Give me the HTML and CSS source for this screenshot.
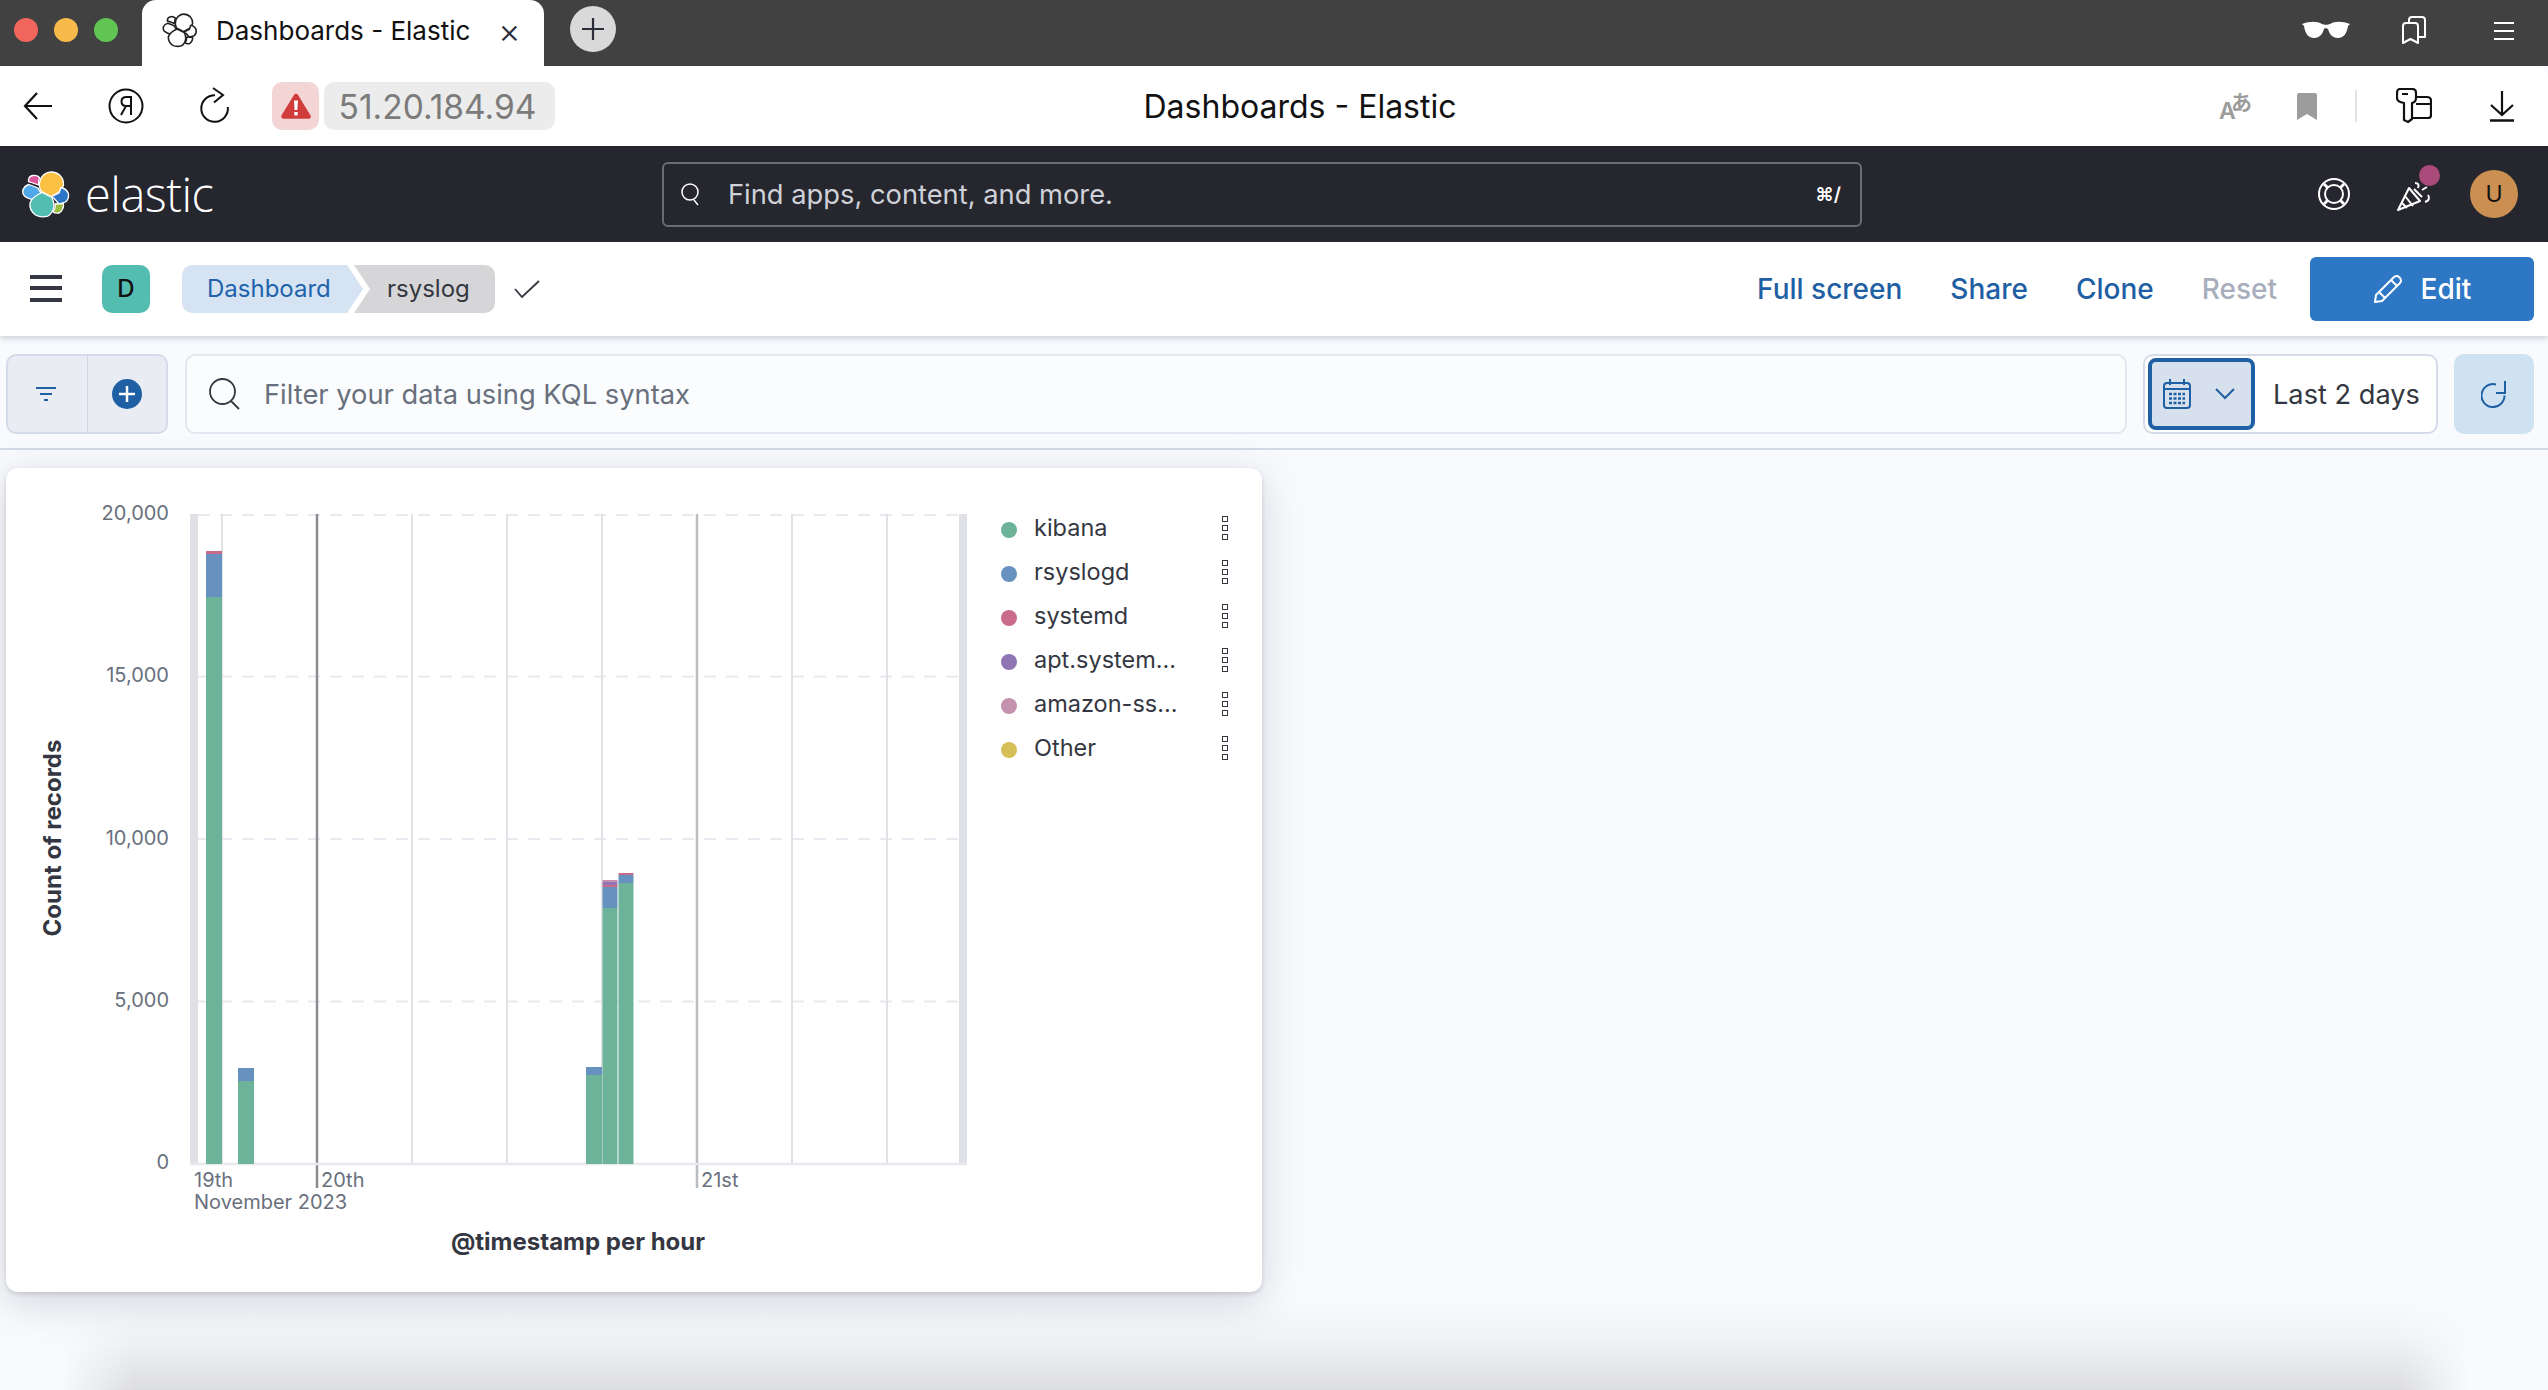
FILE: index.html
```html
<!DOCTYPE html>
<html lang="en">
<head>
  <meta charset="UTF-8">
  <title>Dashboards - Elastic</title>
  <link rel="stylesheet" href="styles.css">
</head>
<body>
  <div class="tabstrip">
    <div class="lights">
      <span class="light red"></span>
      <span class="light yellow"></span>
      <span class="light green"></span>
    </div>
    <div class="tab">
      <svg class="favicon" width="36" height="36" viewBox="0 0 50 50" fill="#fff" stroke="#222" stroke-width="2.200" stroke-linejoin="round">
        <path d="M12 6.500Q16 6 18.500 8.500Q17.500 12 17.500 16L9 13Q7 13 7.500 11Q8 7 12 6.500z"/>
        <path d="M30 3C38 3 43 9 42.500 16C42 19 40 21 38 23L30 27.500L20 22C18 18 18 15 19 12C20 7 25 3 30 3z"/>
        <path d="M8 15.500L17 19Q18 22 20 23.500L14 31Q7 30 3.500 27Q1 24 2 20.500Q4 16.500 8 15.500z"/>
        <path d="M40 18.500Q46 20 47.500 25Q48 30 44.500 33L38 35Q34 30 31 27.500L38 24z"/>
        <path d="M21 23.500L31 28.500Q33 33 33 37Q32 44 27 47Q20 49 14.500 46Q8 41 9 34Q11 28 21 23.500z"/>
        <path d="M34 35L42.500 34.500Q43 41 38 44Q34 44.500 32 43Q35 39 34 35z"/>
      </svg>
      <span class="tab-title">Dashboards - Elastic</span>
      <span class="tab-close">×</span>
    </div>
    <div class="newtab">
      <svg width="24" height="24" viewBox="0 0 24 24" stroke="#2b2e3a" stroke-width="2.200"><path d="M12 1v22M1 12h22"/></svg>
    </div>
    <div class="strip-right">
      <svg width="48" height="18" viewBox="0 0 48 18" fill="#fff"><path d="M0 3C8 0 15 0 20 3c2 1 6 1 8 0 5-3 12-3 20 0l-2 2c-1 7-4 12-10 12-7 0-9-6-10-9-1-1-4-1-4 0-1 3-3 9-10 9C6 17 3 12 2 5z"/></svg>
      <svg width="24" height="29" viewBox="0 0 24 29" fill="none" stroke="#fff" stroke-width="2" stroke-linejoin="round"><path d="M1 10q0-3 3-3h9q3 0 3 3v17l-7.500-4L1 27zM7 7V4q0-3 3-3h10q3 0 3 3v17l-7 0"/></svg>
      <svg width="20" height="19" viewBox="0 0 20 19" stroke="#fff" stroke-width="2"><path d="M0 2h20M0 10h20M0 18h20"/></svg>
    </div>
  </div>

  <div class="toolbar">
    <div class="toolbar-left">
      <svg width="30" height="28" viewBox="0 0 30 28" fill="none" stroke="#111" stroke-width="2.200"><path d="M29 14H2M14 1L2 14l12 13"/></svg>
      <svg class="ya" width="36" height="36" viewBox="0 0 36 36" fill="none" stroke="#111" stroke-width="2"><circle cx="18" cy="18" r="16.500"/><path d="M23 27V9h-4.500q-5 0-5 4.500t5 4.500H23M18 18l-5 9"/></svg>
      <svg class="reload" width="30" height="38" viewBox="0 0 30 38" fill="none" stroke="#111" stroke-width="2"><path d="M15 8.200A13.300 13.300 0 1 0 27.800 20M13 1l10 7-9 7.500"/></svg>
      <div class="site-warn">
        <svg width="30" height="27" viewBox="0 0 30 27"><path d="M15 3L27.500 23.500H2.500z" fill="#d03c3c" stroke="#d03c3c" stroke-width="4.500" stroke-linejoin="round"/><path d="M13 7.500h4l-.6 9.500h-2.800z" fill="#fff"/><rect x="13.300" y="19" width="3.400" height="3.400" fill="#fff"/></svg>
      </div>
      <div class="url-pill">51.20.184.94</div>
    </div>
    <div class="page-title">Dashboards - Elastic</div>
    <div class="toolbar-right">
      <div class="translate"><span class="tr-a">A</span><span class="tr-b">あ</span></div>
      <svg class="saved" width="20" height="27" viewBox="0 0 20 27" fill="#9c9c9c"><path d="M2 0h16q2 0 2 2v25l-10-6L0 27V2q0-2 2-2z"/></svg>
      <span class="tool-sep"></span>
      <svg class="keycard" width="36" height="36" viewBox="0 0 36 36" fill="none" stroke="#111" stroke-width="2.200" stroke-linejoin="round"><path d="M4 1h12q4 0 4 4v5q0 4-4 5v16l-4 3-4-2V15Q1 14 1 10V5q0-4 3-4zM6 6h6" /><path d="M20 9h11q4 0 4 4v14q0 3-3 3H16M20 16h15"/></svg>
      <svg class="download" width="24" height="31" viewBox="0 0 24 31" fill="none" stroke="#111" stroke-width="2.200"><path d="M12 0v24M1 14l11 10 11-10"/><path d="M0 29.500h24" stroke-width="2.500"/></svg>
    </div>
  </div>

  <header class="elastic-bar">
    <div class="logo">
      <svg width="50" height="50" viewBox="0 0 50 50" stroke="#fff" stroke-width="1.300" stroke-linejoin="round">
        <path d="M12 6.500Q16 6 18.500 8.500Q17.500 12 17.500 16L9 13Q7 13 7.500 11Q8 7 12 6.500z" fill="#d9569b"/>
        <path d="M30 3C38 3 43 9 42.500 16C42 19 40 21 38 23L30 27.500L20 22C18 18 18 15 19 12C20 7 25 3 30 3z" fill="#fcc042"/>
        <path d="M8 15.500L17 19Q18 22 20 23.500L14 31Q7 30 3.500 27Q1 24 2 20.500Q4 16.500 8 15.500z" fill="#4fa8e8"/>
        <path d="M40 18.500Q46 20 47.500 25Q48 30 44.500 33L38 35Q34 30 31 27.500L38 24z" fill="#2c75c6"/>
        <path d="M21 23.500L31 28.500Q33 33 33 37Q32 44 27 47Q20 49 14.500 46Q8 41 9 34Q11 28 21 23.500z" fill="#52bdb2"/>
        <path d="M34 35L42.500 34.500Q43 41 38 44Q34 44.500 32 43Q35 39 34 35z" fill="#99bb3f"/>
      </svg>
      <span class="wordmark">elastic</span>
    </div>
    <div class="global-search">
      <svg width="20" height="24" viewBox="0 0 20 24" fill="none" stroke="#fff" stroke-width="1.500"><circle cx="9" cy="10" r="8"/><path d="M13 18l4 5"/></svg>
      <span class="global-search-text">Find apps, content, and more.</span>
      <span class="shortcut">⌘/</span>
    </div>
    <div class="header-icons">
      <svg class="help-icon" width="32" height="32" viewBox="0 0 32 32" fill="none" stroke="#fff" stroke-width="2"><circle cx="16" cy="16" r="15"/><circle cx="16" cy="16" r="9"/><path d="M6 6l4 4M26 6l-4 4M6 26l4-4M26 26l-4-4" stroke-width="3"/></svg>
      <div class="party">
        <svg width="34" height="32" viewBox="0 0 34 32" fill="none" stroke="#fff" stroke-width="2" stroke-linejoin="round"><path d="M12 8L1 30l22-9zM8 16l8 10M5 23l5 5M17 9l8 8"/><path d="M18 3q5 0 3 5M25 10l5-3M28 22q6-2 3-7"/></svg>
        <span class="party-dot"></span>
      </div>
      <div class="user-avatar">U</div>
    </div>
  </header>

  <nav class="navbar">
    <svg class="hamburger" width="32" height="28" viewBox="0 0 32 28" fill="#343741"><rect y="0" width="32" height="4"/><rect y="11" width="32" height="4"/><rect y="23" width="32" height="4"/></svg>
    <div class="space-badge">D</div>
    <div class="crumbs">
      <span class="crumb crumb-link">Dashboard</span>
      <span class="crumb crumb-current">rsyslog</span>
    </div>
    <svg class="saved-check" width="26" height="18" viewBox="0 0 26 18" fill="none" stroke="#343741" stroke-width="1.800"><path d="M1 9l7 8L25 1"/></svg>
    <div class="nav-actions">
      <a class="nav-link">Full screen</a>
      <a class="nav-link">Share</a>
      <a class="nav-link">Clone</a>
      <a class="nav-link disabled">Reset</a>
      <button class="edit-btn">
        <svg width="30" height="30" viewBox="0 0 30 30" fill="none" stroke="#fff" stroke-width="2" stroke-linejoin="round"><path d="M3 21L21 3q3-2 5 0l1 1q2 3 0 5L9 27l-7 1zM6 18l6 6M18 6l6 6"/></svg>
        Edit
      </button>
    </div>
  </nav>

  <div class="querybar">
    <div class="filter-group">
      <div class="filter-btn">
        <svg width="20" height="15" viewBox="0 0 20 15" fill="#1f5fa3"><rect width="20" height="2"/><rect x="4" y="6" width="12" height="2"/><rect x="8" y="12" width="4" height="2"/></svg>
      </div>
      <div class="filter-btn add">
        <svg width="30" height="30" viewBox="0 0 30 30"><circle cx="15" cy="15" r="15" fill="#1f5fa3"/><path d="M15 7v16M7 15h16" stroke="#fff" stroke-width="2.500"/></svg>
      </div>
    </div>
    <div class="kql-input">
      <svg width="32" height="32" viewBox="0 0 32 32" fill="none" stroke="#343741" stroke-width="1.800"><circle cx="14.500" cy="13.500" r="12.500"/><path d="M23 23l8 8"/></svg>
      <span>Filter your data using KQL syntax</span>
    </div>
    <div class="date-picker">
      <div class="date-quick">
        <svg width="28" height="30" viewBox="0 0 28 30" fill="none" stroke="#1f5fa3" stroke-width="2"><rect x="1" y="4" width="26" height="25" rx="3"/><path d="M1 10h26M7 0v6M21 0v6"/><path d="M6 15h16M6 19.500h16M6 24h16" stroke-width="2.500" stroke-dasharray="3 1.500"/></svg>
        <svg width="20" height="12" viewBox="0 0 20 12" fill="none" stroke="#1f5fa3" stroke-width="2"><path d="M1 1l9 9 9-9"/></svg>
      </div>
      <span class="date-label">Last 2 days</span>
    </div>
    <div class="refresh-btn">
      <svg width="26" height="28" viewBox="0 0 26 28" fill="none" stroke="#1f5fa3" stroke-width="2"><path d="M15 4.500A11.500 11.500 0 1 0 23.500 15.500M24 1v12H15"/></svg>
    </div>
  </div>

  <main class="dashboard">
    <section class="panel">
      <svg class="chart" width="995" height="824" viewBox="0 0 995 824">
        <!-- panel origin is 6,468 in page pixels: every coordinate below is already shifted -->
        <rect x="184" y="46" width="8" height="650" fill="#e0e1e6"/>
        <rect x="953" y="46" width="8" height="650" fill="#e0e1e6"/>
        <g stroke="#e9eaef" stroke-width="2" stroke-dasharray="12 10">
          <path d="M192 47H953M192 208.500H953M192 371H953M192 533.500H953"/>
        </g>
        <g stroke="#e1e2e6" stroke-width="2">
          <path d="M216 46V696M406 46V696M501 46V696M596 46V696M786 46V696M881 46V696"/>
        </g>
        <path d="M311 46V720" stroke="#8b8c90" stroke-width="2.500"/>
        <path d="M691 46V720" stroke="#bcbdc1" stroke-width="2.500"/>
        <path d="M184 696H961" stroke="#e8e9ee" stroke-width="2.500"/>

        <rect x="200" y="129" width="16" height="567" fill="#6db39a"/>
        <rect x="200" y="85" width="16" height="44" fill="#6792bf"/>
        <rect x="200" y="83" width="16" height="3" fill="#ca6b8c"/>

        <rect x="232" y="613" width="16" height="83" fill="#6db39a"/>
        <rect x="232" y="600" width="16" height="13" fill="#6792bf"/>

        <rect x="580" y="607" width="16" height="89" fill="#6db39a"/>
        <rect x="580" y="599" width="16" height="8" fill="#6792bf"/>

        <rect x="596.500" y="440" width="15" height="256" fill="#6db39a"/>
        <rect x="596.500" y="419" width="15" height="21" fill="#6792bf"/>
        <rect x="596.500" y="417" width="15" height="2" fill="#ca6b8c"/>
        <rect x="596.500" y="414" width="15" height="3" fill="#9075b4"/>
        <rect x="596.500" y="412" width="15" height="2" fill="#c492ae"/>

        <rect x="612.500" y="415" width="15" height="281" fill="#6db39a"/>
        <rect x="612.500" y="407" width="15" height="8" fill="#6792bf"/>
        <rect x="612.500" y="405" width="15" height="2" fill="#ca6b8c"/>

        <g class="tick-y" text-anchor="end">
          <text x="163" y="52">20,000</text>
          <text x="163" y="214">15,000</text>
          <text x="163" y="377">10,000</text>
          <text x="163" y="539">5,000</text>
          <text x="163" y="701">0</text>
        </g>
        <g class="tick-x">
          <text x="188" y="719">19th</text>
          <text x="315" y="719">20th</text>
          <text x="695" y="719">21st</text>
          <text x="188" y="741">November 2023</text>
        </g>
        <text class="axis-title" x="572" y="782" text-anchor="middle">@timestamp per hour</text>
        <text class="axis-title" transform="translate(55 370) rotate(-90)" text-anchor="middle">Count of records</text>
      </svg>
      <ul class="legend">
        <li class="legend-item"><span class="dot c-kibana"></span><span class="legend-name">kibana</span><span class="kebab"><i></i><i></i><i></i></span></li>
        <li class="legend-item"><span class="dot c-rsyslogd"></span><span class="legend-name">rsyslogd</span><span class="kebab"><i></i><i></i><i></i></span></li>
        <li class="legend-item"><span class="dot c-systemd"></span><span class="legend-name">systemd</span><span class="kebab"><i></i><i></i><i></i></span></li>
        <li class="legend-item"><span class="dot c-apt"></span><span class="legend-name">apt.system...</span><span class="kebab"><i></i><i></i><i></i></span></li>
        <li class="legend-item"><span class="dot c-amazon"></span><span class="legend-name">amazon-ss...</span><span class="kebab"><i></i><i></i><i></i></span></li>
        <li class="legend-item"><span class="dot c-other"></span><span class="legend-name">Other</span><span class="kebab"><i></i><i></i><i></i></span></li>
      </ul>
    </section>
  </main>
  <div class="bottom-shade"></div>
</body>
</html>
```

FILE: styles.css
```css
* {
  box-sizing: border-box;
}
html {
  height: 1390px;
  overflow: hidden;
}
body {
  margin: 0;
  height: 1390px;
  overflow: hidden;
  position: relative;
  font-family: Inter, "Liberation Sans", sans-serif;
  background-color: #f9fafd;
  color: #343741;
}

/* browser chrome */
.tabstrip {
  height: 66px;
  background-color: #414141;
  display: flex;
  align-items: stretch;
}
.lights {
  width: 142px;
  padding-left: 14px;
  display: flex;
  align-items: center;
  gap: 16px;
  padding-bottom: 6px;
}
.light {
  width: 24px;
  height: 24px;
  border-radius: 50%;
}
.red { background-color: #f0665c; }
.yellow { background-color: #f8bb4b; }
.green { background-color: #61c554; }
.tab {
  width: 402px;
  background-color: #fff;
  border-radius: 14px 14px 0 0;
  display: flex;
  align-items: center;
  padding-left: 20px;
  padding-bottom: 6px;
  color: #111;
}
.favicon {
  flex: none;
}
.tab-title {
  margin-left: 18px;
  font-size: 26px;
  white-space: nowrap;
}
.tab-close {
  margin-left: 28px;
  font-size: 34px;
  font-weight: 300;
  color: #2b2e3a;
}
.newtab {
  width: 46px;
  height: 46px;
  margin: 6px 0 0 26px;
  border-radius: 50%;
  background-color: #d9d9d9;
  display: flex;
  align-items: center;
  justify-content: center;
}
.strip-right {
  margin-left: auto;
  padding-right: 34px;
  display: flex;
  align-items: center;
  gap: 52px;
  padding-bottom: 6px;
}
.strip-right svg:last-child {
  margin-left: 16px;
}
.toolbar {
  height: 80px;
  background-color: #fff;
  border-radius: 0 12px 0 0;
  display: flex;
  align-items: center;
  position: relative;
}
.toolbar-left {
  display: flex;
  align-items: center;
  padding-left: 23px;
}
.ya {
  margin-left: 55px;
}
.reload {
  margin-left: 56px;
}
.site-warn {
  margin-left: 42px;
  width: 47px;
  height: 48px;
  border-radius: 10px;
  background-color: #f4d5d6;
  display: flex;
  align-items: center;
  justify-content: center;
}
.url-pill {
  margin-left: 5px;
  width: 231px;
  height: 48px;
  padding-right: 4px;
  border-radius: 10px;
  background-color: #ececec;
  color: #7b7b7b;
  font-size: 33.500px;
  line-height: 50px;
  text-align: center;
}
.page-title {
  position: absolute;
  left: 52px;
  right: 0;
  text-align: center;
  font-size: 32px;
  color: #111;
}
.toolbar-right {
  margin-left: auto;
  padding-right: 34px;
  display: flex;
  align-items: center;
}
.translate {
  width: 33px;
  height: 28px;
  position: relative;
  color: #9c9c9c;
}
.tr-a {
  position: absolute;
  left: 0;
  bottom: 0;
  font-size: 23px;
  line-height: 18px;
  font-weight: 600;
}
.tr-b {
  position: absolute;
  right: 0;
  top: -1px;
  font-family: "Noto Sans CJK JP", sans-serif;
  font-size: 21px;
  line-height: 21px;
  font-weight: 700;
}
.saved {
  margin-left: 45px;
}
.tool-sep {
  width: 2px;
  height: 32px;
  margin-left: 38px;
  background-color: #e3e3e3;
}
.keycard {
  margin-left: 39px;
}
.download {
  margin-left: 58px;
}

/* kibana header */
.elastic-bar {
  height: 96px;
  background-color: #25262e;
  display: flex;
  align-items: center;
  position: relative;
}
.logo {
  display: flex;
  align-items: center;
  padding-left: 21px;
  width: 662px;
}
.wordmark {
  color: #fff;
  font-family: "Open Sans", sans-serif;
  font-size: 47px;
  font-weight: 300;
  margin-left: 14px;
  letter-spacing: -0.5px;
}
.global-search {
  width: 1200px;
  height: 65px;
  border: 2px solid #6a6c75;
  border-radius: 6px;
  display: flex;
  align-items: center;
  padding-left: 17px;
  color: #cfd1d8;
  font-size: 27.300px;
  flex: none;
}
.global-search-text {
  margin-left: 27px;
}
.shortcut {
  margin-left: auto;
  margin-right: 19px;
  color: #fff;
  font-size: 19px;
  font-weight: 600;
}
.header-icons {
  margin-left: auto;
  padding-right: 30px;
  display: flex;
  align-items: center;
}
.party {
  position: relative;
  height: 32px;
  margin: 4px 39px 0 47px;
}
.party-dot {
  position: absolute;
  left: 22px;
  top: -15px;
  width: 21px;
  height: 21px;
  border-radius: 50%;
  background-color: #a94a7a;
}
.user-avatar {
  width: 48px;
  height: 48px;
  border-radius: 50%;
  background-color: #cc8f52;
  color: #111;
  font-size: 23px;
  line-height: 48px;
  text-align: center;
}

/* kibana nav */
.navbar {
  height: 94px;
  background-color: #fff;
  display: flex;
  align-items: center;
  padding: 0 14px 0 30px;
  box-shadow: 0 2px 6px rgba(60, 66, 90, 0.25);
  position: relative;
}
.space-badge {
  width: 48px;
  height: 48px;
  margin-left: 40px;
  border-radius: 10px;
  background-color: #54bdb1;
  color: #111;
  font-size: 24px;
  font-weight: 500;
  line-height: 48px;
  text-align: center;
}
.crumbs {
  display: flex;
  margin-left: 32px;
  height: 48px;
  font-size: 24px;
  line-height: 48px;
}
.crumb {
  display: block;
  height: 48px;
}
.crumb-link {
  width: 181px;
  padding-left: 25px;
  color: #2163ab;
  background-color: #d6e3f3;
  border-radius: 10px 0 0 10px;
  clip-path: polygon(0 0, 165px 0, 181px 50%, 165px 100%, 0 100%);
}
.crumb-current {
  width: 141px;
  margin-left: -9px;
  padding-left: 33px;
  color: #343741;
  background-color: #d6d6d8;
  border-radius: 0 10px 10px 0;
  clip-path: polygon(0 0, 100% 0, 100% 100%, 0 100%, 16px 50%);
}
.saved-check {
  margin-left: 19px;
}
.nav-actions {
  margin-left: auto;
  display: flex;
  align-items: center;
}
.nav-link {
  font-size: 28px;
  font-weight: 500;
  color: #1f5fa3;
  margin-right: 48px;
}
.nav-link.disabled {
  color: #a8aebb;
  margin-right: 33px;
}
.edit-btn {
  width: 224px;
  height: 64px;
  border: none;
  border-radius: 6px;
  background-color: #2e77c5;
  color: #fff;
  font-family: inherit;
  font-size: 28px;
  font-weight: 500;
  display: flex;
  align-items: center;
  justify-content: center;
  gap: 18px;
}

/* query bar */
.querybar {
  height: 114px;
  padding: 18px 14px 0 6px;
  display: flex;
  align-items: flex-start;
  border-bottom: 2px solid #d3dae6;
}
.filter-group {
  width: 162px;
  height: 80px;
  display: flex;
  border: 2px solid #d5dbe8;
  border-radius: 10px;
  background-color: #e9edf3;
}
.filter-btn {
  width: 79px;
  padding-right: 4px;
  display: flex;
  align-items: center;
  justify-content: center;
}
.filter-btn.add {
  flex: 1;
  padding-right: 0;
  border-left: 1px solid #d0d6e3;
}
.kql-input {
  width: 1942px;
  height: 80px;
  margin-left: 17px;
  border: 2px solid #e4e7f0;
  border-radius: 10px;
  background-color: #fbfcfd;
  display: flex;
  align-items: center;
  padding-left: 21px;
  gap: 24px;
  font-size: 27.300px;
  color: #69707d;
}
.date-picker {
  width: 295px;
  height: 80px;
  margin-left: 16px;
  padding: 2px 3px;
  border: 2px solid #d5dbe8;
  border-radius: 10px;
  background-color: #fff;
  display: flex;
  align-items: center;
}
.date-quick {
  width: 107px;
  height: 72px;
  border: 4px solid #1f5fa3;
  border-radius: 8px;
  background-color: #d7e1ed;
  display: flex;
  align-items: center;
  padding-left: 11px;
  gap: 24px;
}
.date-label {
  margin-left: 18px;
  font-size: 27.200px;
  white-space: nowrap;
}
.refresh-btn {
  width: 80px;
  height: 80px;
  margin-left: 16px;
  border-radius: 10px;
  background-color: #cfe2f2;
  display: flex;
  align-items: center;
  justify-content: center;
}

/* dashboard */
.dashboard {
  padding: 18px 0 0 6px;
}
.panel {
  width: 1256px;
  height: 824px;
  display: flex;
  background-color: #fff;
  border-radius: 12px;
  box-shadow: 0 2px 4px rgba(90, 96, 115, 0.22), 0 10px 40px rgba(90, 96, 115, 0.24);
}
.chart {
  flex: none;
}
.chart text {
  font-family: Inter, "Liberation Sans", sans-serif;
}
.tick-y text,
.tick-x text {
  font-size: 20px;
  fill: #69707d;
}
.chart .axis-title {
  font-size: 24px;
  font-weight: 700;
  fill: #343741;
}
.legend {
  list-style: none;
  margin: 40px 0 0;
  padding: 0;
  width: 256px;
}
.legend-item {
  height: 44px;
  display: flex;
  align-items: center;
  font-size: 23.500px;
}
.dot {
  width: 16px;
  height: 16px;
  border-radius: 50%;
  flex: none;
  margin-right: 17px;
}
.c-kibana { background-color: #6db39a; }
.c-rsyslogd { background-color: #6792bf; }
.c-systemd { background-color: #ca6b8c; }
.c-apt { background-color: #9075b4; }
.c-amazon { background-color: #c492ae; }
.c-other { background-color: #d6bf57; }
.legend-name {
  width: 188px;
  margin-bottom: 6px;
  white-space: nowrap;
}
.kebab {
  display: flex;
  flex-direction: column;
  gap: 3px;
  margin-bottom: 4px;
}
.kebab i {
  display: block;
  width: 6px;
  height: 6px;
  border: 1.500px solid #343741;
}

/* shadow of the window sitting under the fold */
.bottom-shade {
  position: absolute;
  left: 0;
  right: 0;
  bottom: 0;
  height: 90px;
  background: linear-gradient(to top, rgba(90, 92, 100, 0.18), rgba(90, 92, 100, 0.11) 30%, rgba(90, 92, 100, 0.04) 62%, rgba(90, 92, 100, 0));
  -webkit-mask-image: linear-gradient(to right, transparent 60px, #000 135px, #000 2400px, transparent 2470px);
  mask-image: linear-gradient(to right, transparent 60px, #000 135px, #000 2400px, transparent 2470px);
}
```
